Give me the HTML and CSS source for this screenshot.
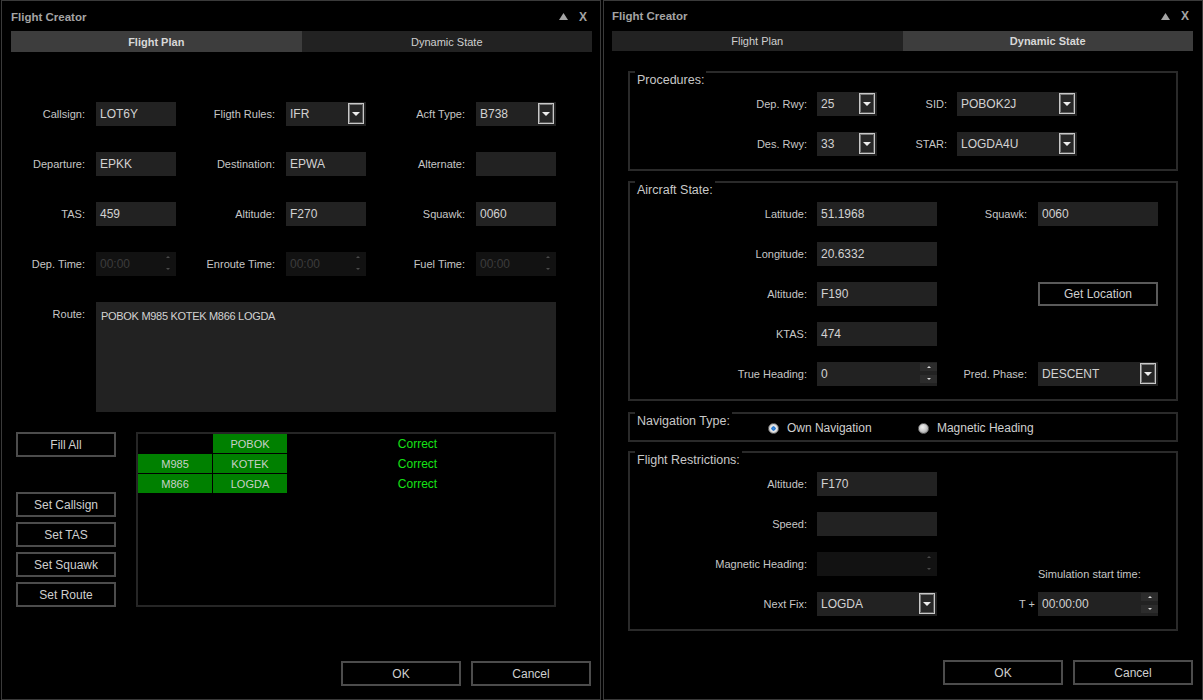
FILE: index.html
```html
<!DOCTYPE html>
<html>
<head>
<meta charset="utf-8">
<link rel="stylesheet" href="styles.css">
</head>
<body>
<div class="window win-left">
  <div class="titlebar">
    <span class="title">Flight Creator</span>
    <span class="winbtns">
      <svg class="wb-up" width="9" height="7" viewBox="0 0 9 7"><polygon points="0,7 4.5,0 9,7" fill="#a4a4a4"/></svg>
      <span class="wb-x">X</span>
    </span>
  </div>
  <div class="tabs">
    <div class="tab active">Flight Plan</div>
    <div class="tab">Dynamic State</div>
  </div>

  <div class="fp-form">
    <div class="lbl">Callsign:</div>
    <div class="field">LOT6Y</div>
    <div class="lbl">Fligth Rules:</div>
    <div class="field select"><span>IFR</span><span class="dd"></span></div>
    <div class="lbl">Acft Type:</div>
    <div class="field select"><span>B738</span><span class="dd"></span></div>

    <div class="lbl">Departure:</div>
    <div class="field">EPKK</div>
    <div class="lbl">Destination:</div>
    <div class="field">EPWA</div>
    <div class="lbl">Alternate:</div>
    <div class="field"></div>

    <div class="lbl">TAS:</div>
    <div class="field">459</div>
    <div class="lbl">Altitude:</div>
    <div class="field">F270</div>
    <div class="lbl">Squawk:</div>
    <div class="field">0060</div>

    <div class="lbl">Dep. Time:</div>
    <div class="field spin disabled"><span>00:00</span><span class="spin-btns"><span class="up"></span><span class="down"></span></span></div>
    <div class="lbl">Enroute Time:</div>
    <div class="field spin disabled"><span>00:00</span><span class="spin-btns"><span class="up"></span><span class="down"></span></span></div>
    <div class="lbl">Fuel Time:</div>
    <div class="field spin disabled"><span>00:00</span><span class="spin-btns"><span class="up"></span><span class="down"></span></span></div>

    <div class="lbl lbl-top">Route:</div>
    <div class="field area">POBOK M985 KOTEK M866 LOGDA</div>
  </div>

  <div class="fp-lower">
    <div class="btn-col">
      <button class="btn">Fill All</button>
      <button class="btn first-set">Set Callsign</button>
      <button class="btn">Set TAS</button>
      <button class="btn">Set Squawk</button>
      <button class="btn">Set Route</button>
    </div>
    <div class="route-table">
      <div class="cell"></div>
      <div class="cell green">POBOK</div>
      <div class="cell ok">Correct</div>
      <div class="cell green">M985</div>
      <div class="cell green">KOTEK</div>
      <div class="cell ok">Correct</div>
      <div class="cell green">M866</div>
      <div class="cell green">LOGDA</div>
      <div class="cell ok">Correct</div>
    </div>
  </div>

  <div class="dialog-btns">
    <button class="btn wide">OK</button>
    <button class="btn wide">Cancel</button>
  </div>
</div>

<div class="window win-right">
  <div class="titlebar">
    <span class="title">Flight Creator</span>
    <span class="winbtns">
      <svg class="wb-up" width="9" height="7" viewBox="0 0 9 7"><polygon points="0,7 4.5,0 9,7" fill="#a4a4a4"/></svg>
      <span class="wb-x">X</span>
    </span>
  </div>
  <div class="tabs tabs-right">
    <div class="tab">Flight Plan</div>
    <div class="tab active">Dynamic State</div>
  </div>

  <div class="ds-body">
    <div class="group">
      <span class="legend">Procedures:</span>
      <div class="grid proc-grid">
        <div class="lbl">Dep. Rwy:</div>
        <div class="field select"><span>25</span><span class="dd"></span></div>
        <div class="lbl">SID:</div>
        <div class="field select"><span>POBOK2J</span><span class="dd"></span></div>

        <div class="lbl">Des. Rwy:</div>
        <div class="field select"><span>33</span><span class="dd"></span></div>
        <div class="lbl">STAR:</div>
        <div class="field select"><span>LOGDA4U</span><span class="dd"></span></div>
      </div>
    </div>

    <div class="group gap-10">
      <span class="legend">Aircraft State:</span>
      <div class="grid state-grid">
        <div class="lbl">Latitude:</div>
        <div class="field">51.1968</div>
        <div class="lbl lbl-r">Squawk:</div>
        <div class="field">0060</div>

        <div class="lbl">Longitude:</div>
        <div class="field">20.6332</div>
        <div></div>
        <div></div>

        <div class="lbl">Altitude:</div>
        <div class="field">F190</div>
        <div></div>
        <button class="btn fill">Get Location</button>

        <div class="lbl">KTAS:</div>
        <div class="field">474</div>
        <div></div>
        <div></div>

        <div class="lbl">True Heading:</div>
        <div class="field spin"><span>0</span><span class="spin-btns"><span class="up"></span><span class="down"></span></span></div>
        <div class="lbl lbl-r">Pred. Phase:</div>
        <div class="field select"><span>DESCENT</span><span class="dd"></span></div>
      </div>
    </div>

    <div class="group nav-group gap-11">
      <span class="legend">Navigation Type:</span>
      <div class="radios">
        <label class="radio r-first"><span class="dot checked"></span>Own Navigation</label>
        <label class="radio"><span class="dot"></span>Magnetic Heading</label>
      </div>
    </div>

    <div class="group gap-9">
      <span class="legend">Flight Restrictions:</span>
      <div class="grid state-grid restr-grid">
        <div class="lbl">Altitude:</div>
        <div class="field">F170</div>
        <div></div>
        <div></div>

        <div class="lbl">Speed:</div>
        <div class="field"></div>
        <div></div>
        <div></div>

        <div class="lbl">Magnetic Heading:</div>
        <div class="field spin disabled"><span></span><span class="spin-btns"><span class="up"></span><span class="down"></span></span></div>
        <div></div>
        <div class="sim-lbl">Simulation start time:</div>

        <div class="lbl">Next Fix:</div>
        <div class="field select"><span>LOGDA</span><span class="dd"></span></div>
        <div class="lbl lbl-t">T +</div>
        <div class="field spin"><span>00:00:00</span><span class="spin-btns"><span class="up"></span><span class="down"></span></span></div>
      </div>
    </div>
  </div>

  <div class="dialog-btns dialog-right">
    <button class="btn wide">OK</button>
    <button class="btn wide">Cancel</button>
  </div>
</div>
</body>
</html>
```

FILE: styles.css
```css
* { box-sizing: border-box; }
html, body { margin: 0; padding: 0; background: #000; }
body {
  width: 1203px;
  height: 700px;
  overflow: hidden;
  display: flex;
  font-family: "Liberation Sans", Arial, sans-serif;
  font-size: 11px;
  color: #c6c6c6;
}

.window {
  height: 700px;
  width: 600px;
  border: 1px solid #3a3a3a;
  background: #000;
  display: flex;
  flex-direction: column;
}
.win-left { margin-left: 1px; }
.win-right { margin-left: 2px; }

/* title bar */
.titlebar {
  height: 30px;
  display: flex;
  align-items: center;
  justify-content: space-between;
  padding: 1px 13px 0 9px;
}
.win-right .titlebar { padding-left: 8px; padding-top: 0; }
.title {
  font-weight: bold;
  font-size: 11.5px;
  color: #a4a4a4;
}
.winbtns { display: flex; align-items: center; gap: 11px; }
.wb-x { font-weight: bold; font-size: 12px; color: #a4a4a4; line-height: 12px; }

/* tabs */
.tabs {
  display: flex;
  height: 21px;
  margin: 0 8px 0 9px;
}
.tabs-right { height: 20px; margin: 0 9px 0 8px; }
.tab {
  flex: 1;
  display: flex;
  align-items: center;
  justify-content: center;
  background: #222;
  color: #cfcfcf;
  font-size: 11px;
}
.tab.active {
  background: #3d3d3d;
  font-weight: bold;
  color: #d8d8d8;
}

/* fields */
.lbl {
  text-align: right;
  padding-right: 11px;
  line-height: 25px;
  font-size: 11px;
  color: #c6c6c6;
  white-space: nowrap;
}
.lbl-top { align-self: start; }
.field {
  height: 24px;
  background: #222;
  color: #d2d2d2;
  font-size: 12px;
  line-height: 25px;
  padding-left: 4px;
  white-space: nowrap;
}
.field.select, .field.spin {
  display: flex;
  justify-content: space-between;
}
.dd {
  width: 16px;
  height: 21px;
  margin: 1px 2px 0 0;
  border: 1px solid #c8c8c8;
  background: #262626;
  box-shadow: inset -1px -1px 0 #5a5a5a, inset 1px 1px 0 #7a7a7a;
  display: flex;
  align-items: center;
  justify-content: center;
}
.dd::after {
  content: "";
  border-left: 4px solid transparent;
  border-right: 4px solid transparent;
  border-top: 4px solid #ececec;
}
.spin-btns {
  width: 17px;
  flex: none;
  display: flex;
  flex-direction: column;
  justify-content: space-between;
  padding: 1px 0 3px;
}
.spin-btns span {
  height: 8px;
  background: #2c2c2c;
  display: flex;
  align-items: center;
  justify-content: center;
}
.spin-btns .up::after {
  content: "";
  border-left: 2px solid transparent;
  border-right: 2px solid transparent;
  border-bottom: 2px solid #d8d8d8;
}
.spin-btns .down::after {
  content: "";
  border-left: 2px solid transparent;
  border-right: 2px solid transparent;
  border-top: 2px solid #d8d8d8;
}
.field.disabled { background: #121212; color: #3c3c3c; }
.field.disabled .spin-btns span { background: transparent; }
.field.disabled .spin-btns .up::after { border-bottom-color: #4a4a4a; }
.field.disabled .spin-btns .down::after { border-top-color: #4a4a4a; }

/* flight plan form */
.fp-form {
  margin-top: 50px;
  display: grid;
  grid-template-columns: 94px 80px 110px 80px 110px 80px;
  grid-template-rows: 24px 24px 24px 24px 110px;
  row-gap: 26px;
}
.field.area {
  grid-column: 2 / 7;
  height: 110px;
  font-size: 11px;
  letter-spacing: -0.3px;
  line-height: 14px;
  padding: 7px 5px;
  white-space: normal;
}

/* lower area */
.fp-lower {
  display: flex;
  margin: 20px 0 0 14px;
}
.btn-col {
  width: 100px;
  display: flex;
  flex-direction: column;
  gap: 5px;
}
.btn {
  height: 25px;
  background: #000;
  border: 2px solid #4c4c4c;
  color: #cfcfcf;
  font-family: "Liberation Sans", Arial, sans-serif;
  font-size: 12px;
  padding: 0;
}
.btn.first-set { margin-top: 30px; }
.route-table {
  margin-left: 20px;
  width: 420px;
  height: 175px;
  border: 2px solid #262626;
  display: grid;
  grid-template-columns: 74px 74px 259px;
  grid-auto-rows: 19px;
  gap: 1px;
  align-content: start;
}
.cell {
  font-size: 11px;
  line-height: 20px;
  text-align: center;
  color: #c8d0c8;
}
.cell.green { background: #008000; }
.cell.ok { color: #16e016; font-size: 12px; }

.dialog-btns {
  display: flex;
  justify-content: flex-end;
  gap: 10px;
  padding-right: 9px;
  margin-top: 54px;
}
.btn.wide { width: 120px; }
.dialog-right { margin-top: 29px; }

/* dynamic state */
.ds-body {
  margin: 20px 0 0 24px;
  width: 550px;
  display: flex;
  flex-direction: column;
}
.group {
  border: 2px solid #2a2a2a;
  display: flex;
  flex-direction: column;
  padding-bottom: 13px;
}
.gap-10 { margin-top: 10px; }
.gap-11 { margin-top: 11px; }
.gap-9 { margin-top: 9px; }
.legend {
  align-self: flex-start;
  margin: -2px 0 0 5px;
  padding: 0 2px;
  background: #000;
  font-size: 12.5px;
  line-height: 18px;
  color: #c8c8c8;
}
.grid {
  margin-top: 3px;
  display: grid;
  grid-auto-rows: 24px;
  row-gap: 16px;
}
.grid .lbl { padding-right: 10px; }
.proc-grid { grid-template-columns: 187px 60px 80px 120px; }
.state-grid { grid-template-columns: 187px 120px 101px 120px; }
.state-grid .lbl-r { padding-right: 11px; }
.grid .lbl-t { padding-right: 3px; }
.sim-lbl {
  align-self: end;
  margin-bottom: -5px;
  font-size: 11px;
  line-height: 14px;
  white-space: nowrap;
  color: #c6c6c6;
}
.btn.fill { height: 24px; border-color: #5a5a5a; }

.nav-group {
  flex-direction: row;
  align-items: flex-start;
  padding-bottom: 5px;
}
.radios {
  display: flex;
  margin-top: 7px;
  margin-left: 36px;
}
.radio {
  display: flex;
  align-items: center;
  gap: 8px;
  height: 14px;
  font-size: 12px;
  color: #cfcfcf;
}
.r-first { width: 150px; }
.dot {
  width: 11px;
  height: 11px;
  border-radius: 50%;
  background: radial-gradient(circle at 40% 35%, #f2f2f2 0%, #cfcfcf 45%, #8c8c8c 100%);
  border: 1px solid #6a6a6a;
}
.dot.checked {
  background: radial-gradient(circle, #3d8ee0 0%, #1f6fc8 30%, #f0f0f0 38%, #c8c8c8 70%, #8c8c8c 100%);
}
```
